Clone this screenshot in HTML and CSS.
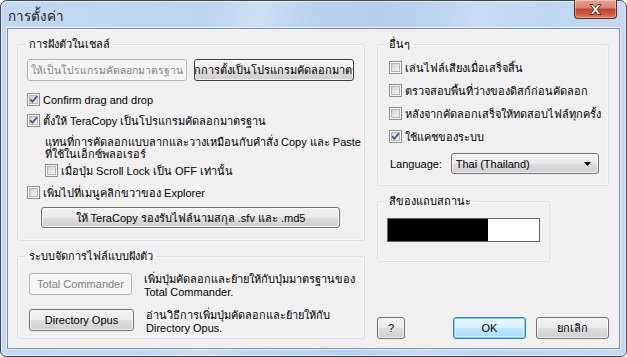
FILE: index.html
```html
<!DOCTYPE html>
<html lang="th">
<head>
<meta charset="utf-8">
<title>การตั้งค่า</title>
<link rel="stylesheet" href="styles.css">
</head>
<body>
<svg class="defs" width="0" height="0" aria-hidden="true">
  <defs>
    <linearGradient id="cbfill" x1="0" y1="0" x2="1" y2="1">
      <stop offset="0" stop-color="#cbcfd5"/>
      <stop offset="1" stop-color="#f7f7f7"/>
    </linearGradient>
  </defs>
</svg>
<div class="window">
  <div class="titlebar">
    <span class="title">การตั้งค่า</span>
    <div class="close">
      <svg width="17" height="13" viewBox="0 0 17 13"><path d="M3 1.5h3.2l2.3 3 2.3-3H14l-3.8 5 3.8 5h-3.2l-2.3-3-2.3 3H3l3.8-5z" fill="#fff" stroke="#5b2a22" stroke-width="1" stroke-linejoin="round"/></svg>
    </div>
  </div>
  <div class="client">
    <div class="col-left">
      <fieldset class="group g-shell">
        <legend>การฝังตัวในเชลล์</legend>
        <div class="btn-row">
          <div class="btn disabled w160 tight"><span>ให้เป็นโปรแกรมคัดลอกมาตรฐาน</span></div>
          <div class="btn focused w160"><span>ยกเลิกการตั้งเป็นโปรแกรมคัดลอกมาตรฐาน</span></div>
        </div>
        <div class="cb-row r-confirm">
          <svg class="cb" width="13" height="13"><rect x=".5" y=".5" width="12" height="12" fill="#fff" stroke="#8e8f8f"/><rect x="2.5" y="2.5" width="8" height="8" fill="url(#cbfill)" stroke="#b0b5ba"/><path d="M3.3 6.4l2.2 2.4 4.4-5.6" fill="none" stroke="#3d4f87" stroke-width="1.7"/></svg>
          <span>Confirm drag and drop</span>
        </div>
        <div class="cb-row r-default">
          <svg class="cb" width="13" height="13"><rect x=".5" y=".5" width="12" height="12" fill="#fff" stroke="#8e8f8f"/><rect x="2.5" y="2.5" width="8" height="8" fill="url(#cbfill)" stroke="#b0b5ba"/><path d="M3.3 6.4l2.2 2.4 4.4-5.6" fill="none" stroke="#3d4f87" stroke-width="1.7"/></svg>
          <span>ตั้งให้ TeraCopy เป็นโปรแกรมคัดลอกมาตรฐาน</span>
        </div>
        <p class="desc">แทนที่การคัดลอกแบบลากและวางเหมือนกับคำสั่ง Copy และ Paste<br>ที่ใช้ในเอ็กซ์พลอเรอร์</p>
        <div class="cb-row r-scroll">
          <svg class="cb" width="13" height="13"><rect x=".5" y=".5" width="12" height="12" fill="#fff" stroke="#8e8f8f"/><rect x="2.5" y="2.5" width="8" height="8" fill="url(#cbfill)" stroke="#b0b5ba"/></svg>
          <span>เมื่อปุ่ม Scroll Lock เป็น OFF เท่านั้น</span>
        </div>
        <div class="cb-row r-menu">
          <svg class="cb" width="13" height="13"><rect x=".5" y=".5" width="12" height="12" fill="#fff" stroke="#8e8f8f"/><rect x="2.5" y="2.5" width="8" height="8" fill="url(#cbfill)" stroke="#b0b5ba"/></svg>
          <span>เพิ่มไปที่เมนูคลิกขวาของ Explorer</span>
        </div>
        <div class="btn wide"><span>ให้ TeraCopy รองรับไฟล์นามสกุล .sfv และ .md5</span></div>
      </fieldset>

      <fieldset class="group g-fm">
        <legend>ระบบจัดการไฟล์แบบฝังตัว</legend>
        <div class="fm-row">
          <div class="btn disabled w105"><span>Total Commander</span></div>
          <p class="fm-text">เพิ่มปุ่มคัดลอกและย้ายให้กับปุ่มมาตรฐานของ<br>Total Commander.</p>
        </div>
        <div class="fm-row">
          <div class="btn w105"><span>Directory Opus</span></div>
          <p class="fm-text">อ่านวิธีการเพิ่มปุ่มคัดลอกและย้ายให้กับ<br>Directory Opus.</p>
        </div>
      </fieldset>
    </div>

    <div class="col-right">
      <fieldset class="group g-other">
        <legend>อื่นๆ</legend>
        <div class="cb-row o1">
          <svg class="cb" width="13" height="13"><rect x=".5" y=".5" width="12" height="12" fill="#fff" stroke="#8e8f8f"/><rect x="2.5" y="2.5" width="8" height="8" fill="url(#cbfill)" stroke="#b0b5ba"/></svg>
          <span>เล่นไฟล์เสียงเมื่อเสร็จสิ้น</span>
        </div>
        <div class="cb-row o2">
          <svg class="cb" width="13" height="13"><rect x=".5" y=".5" width="12" height="12" fill="#fff" stroke="#8e8f8f"/><rect x="2.5" y="2.5" width="8" height="8" fill="url(#cbfill)" stroke="#b0b5ba"/></svg>
          <span>ตรวจสอบพื้นที่ว่างของดิสก์ก่อนคัดลอก</span>
        </div>
        <div class="cb-row o3">
          <svg class="cb" width="13" height="13"><rect x=".5" y=".5" width="12" height="12" fill="#fff" stroke="#8e8f8f"/><rect x="2.5" y="2.5" width="8" height="8" fill="url(#cbfill)" stroke="#b0b5ba"/></svg>
          <span>หลังจากคัดลอกเสร็จให้ทดสอบไฟล์ทุกครั้ง</span>
        </div>
        <div class="cb-row o4">
          <svg class="cb" width="13" height="13"><rect x=".5" y=".5" width="12" height="12" fill="#fff" stroke="#8e8f8f"/><rect x="2.5" y="2.5" width="8" height="8" fill="url(#cbfill)" stroke="#b0b5ba"/><path d="M3.3 6.4l2.2 2.4 4.4-5.6" fill="none" stroke="#3d4f87" stroke-width="1.7"/></svg>
          <span>ใช้แคชของระบบ</span>
        </div>
        <div class="lang-row">
          <span class="lang-label">Language:</span>
          <div class="select">
            <span>Thai (Thailand)</span>
            <svg width="7" height="4" viewBox="0 0 7 4"><path d="M0 0h7L3.5 4z" fill="#000"/></svg>
          </div>
        </div>
      </fieldset>

      <fieldset class="group g-color">
        <legend>สีของแถบสถานะ</legend>
        <div class="colorbar"><div class="colorbar-fill" style="width:100px"></div></div>
      </fieldset>

      <div class="dlg-buttons">
        <div class="btn help"><span>?</span></div>
        <div class="spacer"></div>
        <div class="btn default w73"><span>OK</span></div>
        <div class="btn w73"><span>ยกเลิก</span></div>
      </div>
    </div>
  </div>
</div>
</body>
</html>
```

FILE: styles.css
```css
* { box-sizing: border-box; }
html, body { margin: 0; padding: 0; background: #fff; }
.defs { position: absolute; }
body {
  font-family: "Liberation Sans", Arial, sans-serif;
  font-size: 11px;
  color: #000;
}
.window {
  width: 627px;
  height: 357px;
  border: 1px solid #3e4856;
  border-radius: 7px 7px 6px 6px;
  padding: 0 6px 7px 6px;
  background:
    linear-gradient(100deg, rgba(255,255,255,0) 30%, rgba(255,255,255,.25) 38%, rgba(255,255,255,0) 46%, rgba(255,255,255,0) 60%, rgba(255,255,255,.2) 70%, rgba(255,255,255,0) 80%),
    linear-gradient(to right, #c3d9f2, #bcd4ef 40%, #b5cfed 60%, #c4daf3);
  box-shadow: inset 0 0 0 1px rgba(255,255,255,.55);
  display: flex;
  flex-direction: column;
}
.titlebar {
  height: 27px;
  display: flex;
  align-items: flex-start;
  justify-content: space-between;
}
.title {
  font-size: 13.5px;
  margin: 8px 0 0 1px;
  color: #1e1e1e;
  line-height: 16px;
}
.close {
  width: 43px;
  height: 19px;
  margin: -1px 3px 0 0;
  border: 1px solid #5e2b24;
  border-top: none;
  border-radius: 0 0 4px 4px;
  background: linear-gradient(#e8a493 0%, #d8806b 45%, #c2422d 50%, #cc5a43 80%, #e1876c 100%);
  box-shadow: inset 0 0 0 1px rgba(255,255,255,.35);
  display: flex;
  align-items: center;
  justify-content: center;
}
.client {
  flex: 1;
  background: #f0f0f0;
  border: 1px solid #7f8fa5;
  box-shadow: 0 0 0 1px rgba(255,255,255,.6);
  padding: 8px 10px 0 9px;
  display: grid;
  grid-template-columns: 348px 232px;
  column-gap: 12px;
  align-items: start;
}
.col-left, .col-right { display: flex; flex-direction: column; }

.group {
  margin: 0;
  padding: 0 9px;
  min-width: 0;
  border: 1px solid #d5dfe5;
  border-radius: 3px;
  box-shadow: inset 0 0 0 1px rgba(255,255,255,.5);
}
.group legend {
  margin-left: -1px;
  padding: 0 3px;
  line-height: 14px;
  height: 14px;
  font-size: 11px;
}
.g-shell { height: 204px; }
.g-fm { height: 90px; margin-top: 8px; }
.g-other { height: 149px; }
.g-color { height: 68px; width: 173px; margin-top: 8px; }

.btn {
  height: 22px;
  border: 1px solid #707070;
  border-radius: 3px;
  background: linear-gradient(#f2f2f2 0%, #ebebeb 48%, #dddddd 52%, #cfcfcf 100%);
  box-shadow: inset 0 0 0 1px rgba(255,255,255,.75);
  display: flex;
  align-items: center;
  justify-content: center;
  white-space: nowrap;
  overflow: hidden;
  font-size: 11px;
}
.btn.tight { font-size: 10.4px; }
.btn.disabled {
  border-color: #adb2b5;
  background: #f4f4f4;
  color: #838383;
}
.btn.focused {
  border-color: #3c3c3c;
}
.btn.default {
  border-color: #3c7fb1;
  background: linear-gradient(#eaf6fd 0%, #d9f0fc 48%, #bee6fd 52%, #a7d9f5 100%);
  box-shadow: inset 0 0 0 1px #6ad4f7, inset 0 0 0 2px rgba(255,255,255,.5);
}
.w160 { width: 160px; }
.w105 { width: 105px; }
.w73 { width: 73px; }
.btn-row { display: flex; gap: 7px; margin-top: 8px; }

.cb-row {
  display: flex;
  align-items: center;
  height: 13px;
  gap: 3px;
  white-space: nowrap;
}
.cb { flex: none; display: block; }
.r-confirm { margin-top: 12px; }
.r-default { margin-top: 8px; }
.desc { margin: 9px 0 0 18px; line-height: 12px; white-space: nowrap; }
.r-scroll { margin-top: 4px; margin-left: 18px; }
.r-menu { margin-top: 9px; }
.btn.wide { width: 299px; margin: 8px 0 0 14px; height: 21px; }

.fm-row { display: flex; gap: 12px; align-items: flex-start; margin-top: 10px; }
.fm-row + .fm-row { margin-top: 10px; }
.fm-row .btn { margin-left: 2px; }
.fm-text { margin: 0; line-height: 13px; white-space: nowrap; }

.g-other .cb-row { margin-left: 2px; }
.o1 { margin-top: 10px; }
.o2, .o3, .o4 { margin-top: 10px; }
.lang-row { display: flex; align-items: center; margin-top: 10px; margin-left: 3px; }
.lang-label { width: 61px; }
.select {
  width: 149px;
  height: 21px;
  border: 1px solid #707070;
  border-radius: 3px;
  background: linear-gradient(#f2f2f2 0%, #ebebeb 48%, #dddddd 52%, #cfcfcf 100%);
  box-shadow: inset 0 0 0 1px rgba(255,255,255,.75);
  display: flex;
  align-items: center;
  justify-content: space-between;
  padding: 0 7px 0 4px;
}
.colorbar {
  margin: 10px 0 0 0;
  width: 153px;
  height: 24px;
  border: 1px solid #646464;
  background: #fff;
}
.colorbar-fill { height: 100%; background: #000; }

.dlg-buttons { display: flex; gap: 10px; margin-top: 55px; }
.btn.help { width: 28px; }
.spacer { flex: 1; }
```
